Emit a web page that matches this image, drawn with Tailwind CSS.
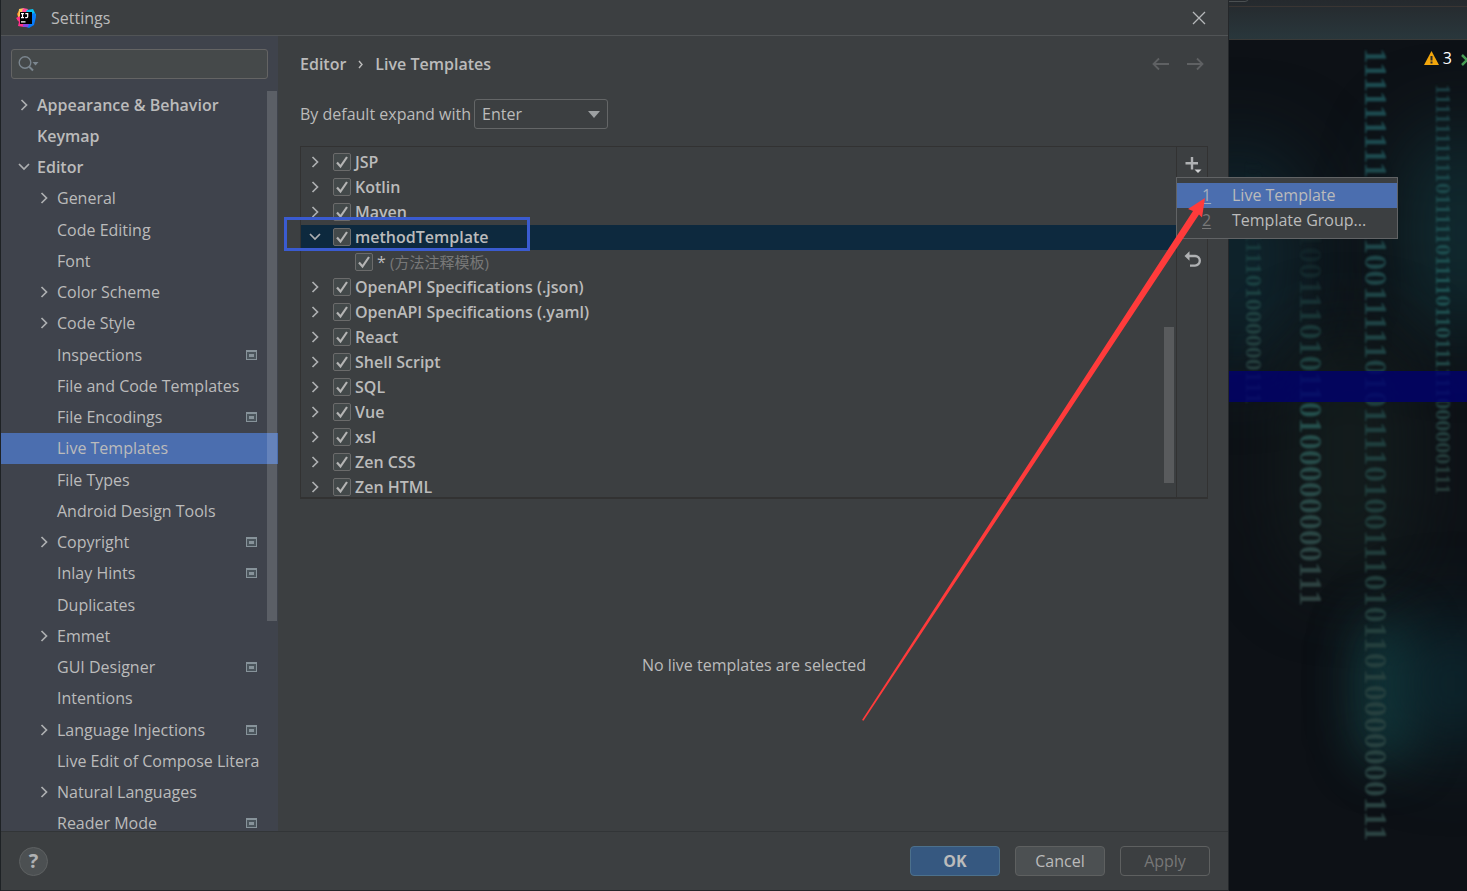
<!DOCTYPE html>
<html lang="en">
<head>
    <meta charset="UTF-8">
    <meta name="viewport" content="width=device-width, initial-scale=1.0">
    <title>Settings</title>
    <script src="https://cdn.jsdelivr.net/npm/@tailwindcss/browser@4"></script>
</head>

<body class="h-screen overflow-hidden bg-[#1e2225] font-['Open_Sans','Noto_Sans_CJK_SC',sans-serif] text-base text-[#bbbbbb]">
    <div id="app" class="relative flex h-full pl-px">

        <!-- settings dialog -->
        <div class="relative z-10 flex min-w-0 flex-1 flex-col border-b border-r border-[#24272a] bg-[#3c3f41]">

            <header class="flex h-9 shrink-0 items-center border-b border-[#515456] pl-[15px] pr-[21px]">
                <svg class="size-5" viewBox="0 0 20 20" aria-hidden="true">
                    <path fill="#fc801d" d="M1 6 4 1l6 8-3 6-6-3 1-3z" />
                    <path fill="#fe2f8a" d="m0 10 4-2 5 7-1 4-6-1 1-4z" />
                    <path fill="#fdc95d" d="m3 1 5-1 1 5-7 4z" />
                    <path fill="#ff4f9c" d="m7 0 5 1-2 5-4-2z" />
                    <path fill="#07c3f2" d="m11 2 6-1 3 6-3 6-7-9z" />
                    <path fill="#087cfa" d="m19 5 1 4-2 8-5 3-6-2 7-12z" />
                    <path fill="#8b45e0" d="m7 19 1-4 5 1-1 3z" />
                    <path fill="#000" d="M4 4h12v12H4z" />
                    <path fill="none" stroke="#fff" stroke-width="1.2" d="M5 5.600h3M6.500 5.600v4M5 9.600h3M9.300 5.600h2.400v3q0 1-1 1H9.200M5 13.900h4.500" />
                </svg>
                <h1 class="ml-[15px] flex-1">Settings</h1>
                <button type="button" aria-label="Close" class="text-[#b6b8ba]">
                    <svg class="size-4" viewBox="0 0 16 16" fill="none" stroke="currentColor" stroke-width="1.3"><path d="m2 2 12 12M14 2 2 14" /></svg>
                </button>
            </header>

            <div class="flex min-h-0 flex-1">

                <!-- sidebar -->
                <aside class="flex w-[277px] shrink-0 flex-col bg-[#3f434c]">
                    <div class="relative mx-[10px] mb-[10px] mt-[13px] shrink-0">
                        <input type="search" aria-label="Search settings" class="block h-[30px] w-full rounded-[3px] border border-[#646464] bg-[#45494a] pl-8 outline-none">
                        <svg class="pointer-events-none absolute left-[7px] top-[6px] h-[18px] w-[22px]" viewBox="0 0 22 18" aria-hidden="true">
                            <circle cx="7" cy="7.500" r="5.800" fill="none" stroke="#7b868f" stroke-width="1.400" />
                            <path fill="none" stroke="#7b868f" stroke-width="2" d="m11 11.500 4 4" />
                            <path fill="#7b868f" d="M14.500 7h6l-3 3.500z" />
                        </svg>
                    </div>
                    <nav class="relative min-h-0 flex-1 overflow-hidden" aria-label="Settings">
                        <ul id="tree" class="grid h-[calc(100%+8px)] auto-rows-fr grid-cols-1"></ul>
                        <div class="absolute right-px top-[2px] h-[530px] w-[10px] bg-white/15"></div>
                    </nav>
                </aside>

                <!-- content -->
                <main class="flex min-w-0 flex-1 flex-col pl-[22px] pr-5">
                    <div class="flex h-14 shrink-0 items-center font-semibold">
                        <a href="#">Editor</a>
                        <svg class="mx-[11px] h-[9px] w-[7px]" viewBox="0 0 7 9" fill="none" stroke="#bbbbbb" stroke-width="1.400" aria-hidden="true"><path d="m2 1 3 3.500-3 3.500" /></svg>
                        <h2 class="flex-1">Live Templates</h2>
                        <button type="button" aria-label="Back" disabled class="mr-4 text-[#5f6163]">
                            <svg class="h-[14px] w-[18px]" viewBox="0 0 18 14" fill="none" stroke="currentColor" stroke-width="1.800"><path d="M17 7H2M7 1.500 1.500 7 7 12.500" /></svg>
                        </button>
                        <button type="button" aria-label="Forward" disabled class="mr-1 text-[#5f6163]">
                            <svg class="h-[14px] w-[18px]" viewBox="0 0 18 14" fill="none" stroke="currentColor" stroke-width="1.800"><path d="M1 7h15M11 1.500 16.500 7 11 12.500" /></svg>
                        </button>
                    </div>

                    <div class="mt-[6px] flex h-[31px] shrink-0 items-center">
                        <label for="expand">By default expand with</label>
                        <div class="relative ml-[3px]">
                            <select id="expand" class="block h-[30px] w-[134px] appearance-none rounded-[3px] border border-[#646667] bg-[#3c3f41] pl-[7px] outline-none">
                                <option>Enter</option>
                                <option>Tab</option>
                                <option>Space</option>
                            </select>
                            <svg class="pointer-events-none absolute right-2 top-3 h-[7px] w-3" viewBox="0 0 12 7" aria-hidden="true"><path fill="#9da0a2" d="M0 0h12L6 7z" /></svg>
                        </div>
                    </div>

                    <section class="mt-[17px] flex h-[353px] shrink-0 border border-b-2 border-[#323232]">
                        <div class="relative min-w-0 flex-1 overflow-hidden">
                            <ul id="templates" class="-mt-[22px]"></ul>
                            <div class="absolute bottom-[14px] right-[2px] h-[156px] w-[10px] bg-[#595b5d]"></div>
                        </div>
                        <div class="relative w-[31px] shrink-0 border-l border-[#323232]">
                            <button type="button" aria-label="Add" class="ml-2 mt-[9px] block">
                                <svg class="size-[18px]" viewBox="0 0 18 18"><path fill="none" stroke="#afb1b3" stroke-width="2.400" d="M7 1v12.500M.5 7.300h12.500" /><path fill="#d0d2d4" d="M9.500 13.500h7L13 17z" /></svg>
                            </button>
                            <button type="button" aria-label="Restore defaults" class="ml-[7px] mt-[77px] block">
                                <svg class="size-[18px]" viewBox="0 0 18 18"><path fill="none" stroke="#afb1b3" stroke-width="2.400" d="M4 5h7a4.800 4.800 0 0 1 0 9.600H6" /><path fill="#afb1b3" d="M.5 5 5.500.3v9.400z" /></svg>
                            </button>

                            <!-- add menu -->
                            <div role="menu" class="absolute -left-px top-[30px] w-[222px] border border-[#616365] bg-[#3c3f41] py-[5px]">
                                <button type="button" role="menuitem" class="flex h-[25px] w-full items-center bg-[#4b6eaf] pb-px pl-[25px] text-left">
                                    <span class="w-[30px] text-[#a3aebf] underline underline-offset-2">1</span>Live Template
                                </button>
                                <button type="button" role="menuitem" class="flex h-[25px] w-full items-center pb-px pl-[25px] text-left">
                                    <span class="w-[30px] text-[#787878] underline underline-offset-2">2</span>Template Group...
                                </button>
                            </div>
                        </div>
                    </section>

                    <p class="flex flex-1 items-center justify-center">No live templates are selected</p>
                </main>
            </div>

            <footer class="flex h-[59px] shrink-0 items-center border-t border-[#323537] px-[18px]">
                <button type="button" aria-label="Help" class="size-[29px] rounded-full border border-[#5e6162] bg-[#4c5052] text-xl font-bold leading-none text-[#afb1b3]">?</button>
                <div class="ml-auto flex gap-[15px]">
                    <button type="button" class="h-[30px] w-[90px] rounded-[4px] border border-[#4c708c] bg-[#365880] font-bold">OK</button>
                    <button type="button" class="h-[30px] w-[90px] rounded-[4px] border border-[#5e6060] bg-[#4c5052]">Cancel</button>
                    <button type="button" disabled class="h-[30px] w-[90px] rounded-[4px] border border-[#5e6060] text-[#777777]">Apply</button>
                </div>
            </footer>
        </div>

        <!-- editor window behind the dialog -->
        <div class="relative w-[238px] shrink-0 overflow-hidden bg-[#0d1116]">
            <div class="absolute -left-16 top-36 h-56 w-36 rounded-full bg-[#10303a]/60 blur-2xl"></div>
            <div class="absolute left-44 top-32 h-52 w-28 rounded-full bg-[#12363c]/70 blur-2xl"></div>
            <div class="absolute left-16 top-[340px] h-60 w-28 rounded-full bg-[#15211f]/80 blur-2xl"></div>
            <div class="absolute left-32 top-[620px] h-36 w-14 rounded-full bg-[#14484a]/70 blur-xl"></div>
            <div class="absolute left-40 top-[620px] h-32 w-32 rounded-full bg-[#0c2d36]/80 blur-2xl"></div>

            <div class="absolute inset-x-0 top-0 h-10 border-b border-[#3a3a38] bg-linear-to-b from-[#25292d] to-[#29373c]"></div>
            <div class="absolute inset-x-0 top-[6px] h-px bg-[#3a3533]"></div>
            <div class="absolute -left-2 -top-4 h-[18px] w-7 rounded-br border border-[#4b5052]"></div>

            <div aria-hidden="true" class="absolute inset-0 font-['Liberation_Serif',serif] font-bold blur-[1px]">
                <span class="absolute bottom-[487px] left-[13px] bg-linear-to-b from-transparent via-[#1c4444] to-[#2b3f3d] bg-clip-text text-2xl leading-6 whitespace-nowrap text-transparent [writing-mode:vertical-rl]">110100111101000000111</span>
                <span class="absolute bottom-[285px] left-[66px] bg-linear-to-b from-transparent via-[#24504d] to-[#2f4241] bg-clip-text text-[32px] leading-8 whitespace-nowrap text-transparent [writing-mode:vertical-rl]">0100111010110100000000111</span>
                <span class="absolute bottom-[50px] left-[131px] bg-linear-to-b from-[#1d4b50] from-10% via-[#203c3a] via-60% to-[#2c4443] bg-clip-text text-[32px] leading-8 whitespace-nowrap text-transparent [writing-mode:vertical-rl]">1111111111001100111110101111010011101011010000000111</span>
                <span class="absolute bottom-[396px] left-[203px] bg-linear-to-b from-[#1b3f44] via-[#1f5656] to-[#263a38] bg-clip-text text-[22px] leading-[22px] whitespace-nowrap text-transparent [writing-mode:vertical-rl]">1111111111011111011110110111111000000111</span>
            </div>

            <div class="absolute inset-x-0 top-[371px] h-[31px] bg-[#00006e]/80"></div>

            <div class="absolute -right-[10px] top-[50px] flex items-center text-white">
                <svg class="h-[14px] w-[15px]" viewBox="0 0 15 14" aria-hidden="true"><path fill="#f2a60c" d="M7.500 0 15 14H0z" /><path fill="#2b2b2b" d="M6.500 5h2v4.500h-2zM6.500 10.500h2v2h-2z" /></svg>
                <span class="ml-1 leading-4">3</span>
                <svg class="ml-[9px] h-3 w-4 self-end" viewBox="0 0 16 12" fill="none" stroke="#499c54" stroke-width="2.500" aria-hidden="true"><path d="m1 1 10 10M1 11l9-9" /></svg>
            </div>
        </div>

        <!-- callouts -->
        <svg class="pointer-events-none absolute left-0 top-0 z-20 h-[891px] w-[1467px]" viewBox="0 0 1467 891" aria-hidden="true">
            <path fill="none" stroke="#3a5bd0" stroke-width="3" d="M285.500 218.500h243v31h-243z" />
            <path fill="#ff3b3b" d="M1205 198 1188 209l5 2L862 720l1.500.8L1199 214.500l3 3z" />
        </svg>
    </div>

    <script>
        // [label, level, expander, has project icon]
        const tree = [
            ["Appearance & Behavior", 0, "closed"],
            ["Keymap", 0],
            ["Editor", 0, "open"],
            ["General", 1, "closed"],
            ["Code Editing", 1],
            ["Font", 1],
            ["Color Scheme", 1, "closed"],
            ["Code Style", 1, "closed"],
            ["Inspections", 1, "", true],
            ["File and Code Templates", 1],
            ["File Encodings", 1, "", true],
            ["Live Templates", 1],
            ["File Types", 1],
            ["Android Design Tools", 1],
            ["Copyright", 1, "closed", true],
            ["Inlay Hints", 1, "", true],
            ["Duplicates", 1],
            ["Emmet", 1, "closed"],
            ["GUI Designer", 1, "", true],
            ["Intentions", 1],
            ["Language Injections", 1, "closed", true],
            ["Live Edit of Compose Litera", 1],
            ["Natural Languages", 1, "closed"],
            ["Reader Mode", 1, "", true],
        ];

        const templates = ["JavaScript Testing", "JSP", "Kotlin", "Maven", "methodTemplate", "*", "OpenAPI Specifications (.json)",
            "OpenAPI Specifications (.yaml)", "React", "Shell Script", "SQL", "Vue", "xsl", "Zen CSS", "Zen HTML"];

        const chevron = (state) => `
            <svg class="size-3 shrink-0" viewBox="0 0 12 12" fill="none" stroke="#adafb1" stroke-width="1.700" aria-hidden="true">
                ${state === "open" ? '<path d="m1 3 5 5 5-5" />' : state === "closed" ? '<path d="m3.500 1 5 5-5 5" />' : ""}
            </svg>`;

        const projectIcon = `
            <svg class="ml-auto h-[10px] w-[11px] shrink-0" viewBox="0 0 11 10" aria-hidden="true">
                <path fill="#87939a" d="M0 0h11v10H0z" /><path fill="#4b555c" d="M1 2h9v7H1z" /><path fill="#87939a" d="M3 4h5v3H3z" />
            </svg>`;

        document.getElementById("tree").innerHTML = tree.map(([label, level, state, icon]) => `
            <li class="${label === "Live Templates" ? "bg-[#4b6eaf]" : ""}">
                <a href="#" class="flex h-full items-center whitespace-nowrap pr-[21px] ${level ? "pl-[37px]" : "pl-[17px] font-semibold"}">
                    ${chevron(state)}
                    <span class="ml-[7px]">${label.replace("&", "&amp;")}</span>
                    ${icon ? projectIcon : ""}
                </a>
            </li>`).join("");

        document.getElementById("templates").innerHTML = templates.map((name, i) => {
            const child = name === "*";
            return `
            <li class="flex h-[25px] items-center pb-px ${name === "methodTemplate" ? "bg-[#0d293e]" : ""} ${child ? "pl-[54px]" : "pl-2"}">
                ${child ? "" : chevron(name === "methodTemplate" ? "open" : "closed")}
                <span class="relative size-[18px] ${child ? "" : "ml-3"}">
                    <input type="checkbox" id="tpl-${i}" checked class="block size-[18px] appearance-none rounded-[2px] border border-[#6b6b6b] bg-[#43494a]">
                    <svg class="pointer-events-none absolute inset-0 size-[18px]" viewBox="0 0 18 18" fill="none" stroke="#b4b4b4" stroke-width="2.200" aria-hidden="true"><path d="m4 9.500 3.500 4L14 4" /></svg>
                </span>
                <label for="tpl-${i}" class="ml-1 ${child ? "text-[#bbbbbb]" : "font-semibold"}">${child ? '* <span class="text-[15px] text-[#787878]">(方法注释模板)</span>' : name}</label>
            </li>`;
        }).join("");
    </script>
</body>
</html>
